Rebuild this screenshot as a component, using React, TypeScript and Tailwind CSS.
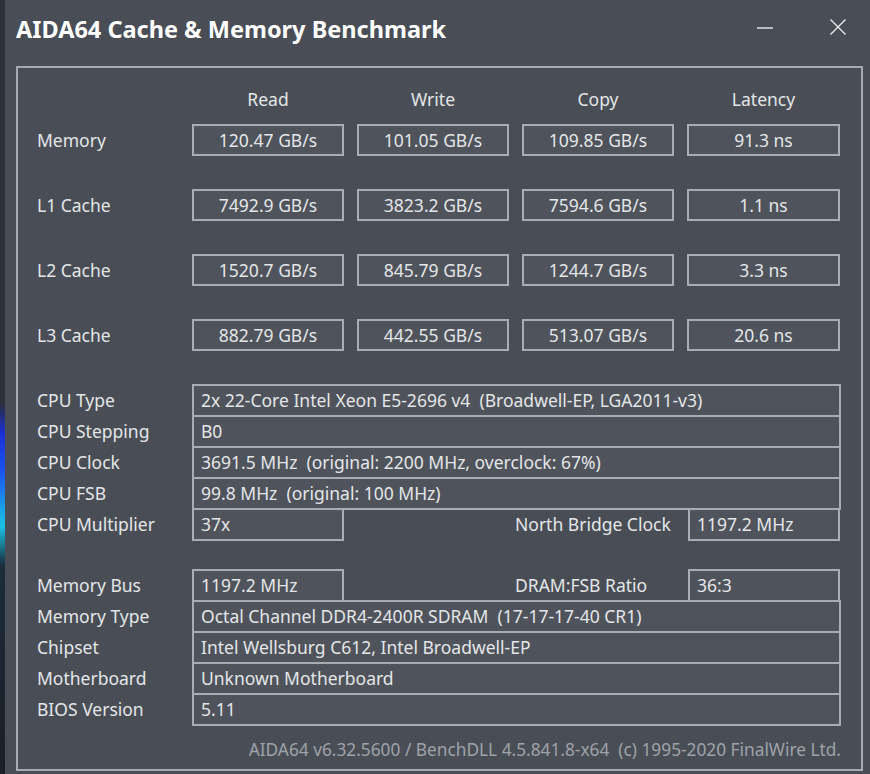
import React from "react";

const BENCH = [
  { label: "Memory", values: ["120.47 GB/s", "101.05 GB/s", "109.85 GB/s", "91.3 ns"] },
  { label: "L1 Cache", values: ["7492.9 GB/s", "3823.2 GB/s", "7594.6 GB/s", "1.1 ns"] },
  { label: "L2 Cache", values: ["1520.7 GB/s", "845.79 GB/s", "1244.7 GB/s", "3.3 ns"] },
  { label: "L3 Cache", values: ["882.79 GB/s", "442.55 GB/s", "513.07 GB/s", "20.6 ns"] },
];

const HEADERS = ["Read", "Write", "Copy", "Latency"];

const CPU_ROWS = [
  { label: "CPU Type", value: "2x 22-Core Intel Xeon E5-2696 v4  (Broadwell-EP, LGA2011-v3)" },
  { label: "CPU Stepping", value: "B0" },
  { label: "CPU Clock", value: "3691.5 MHz  (original: 2200 MHz, overclock: 67%)" },
  { label: "CPU FSB", value: "99.8 MHz  (original: 100 MHz)" },
];

const MEM_ROWS = [
  { label: "Memory Type", value: "Octal Channel DDR4-2400R SDRAM  (17-17-17-40 CR1)" },
  { label: "Chipset", value: "Intel Wellsburg C612, Intel Broadwell-EP" },
  { label: "Motherboard", value: "Unknown Motherboard" },
  { label: "BIOS Version", value: "5.11" },
];

const box = "border-2 border-[#a9adb3] bg-[#4f535b]";

function InfoRow({ label, value }: { label: string; value: string }) {
  return (
    <div className="-mt-[2px] flex h-[33px] items-center pb-[2px] first:mt-0">
      <div className="w-[174px] pl-[19px]">{label}</div>
      <div className={`${box} -mb-[2px] flex h-[33px] flex-1 items-center whitespace-pre pb-[2px] pl-[7px]`}>{value}</div>
    </div>
  );
}

function SplitRow({ label, value, label2, value2 }: { label: string; value: string; label2: string; value2: string }) {
  return (
    <div className="-mt-[2px] flex h-[33px] items-center pb-[2px] first:mt-0">
      <div className="w-[174px] pl-[19px]">{label}</div>
      <div className={`${box} -mb-[2px] flex h-[33px] w-[152px] items-center pb-[2px] pl-[7px]`}>{value}</div>
      <div className="w-[171px]" />
      <div className="w-[173px]">{label2}</div>
      <div className={`${box} -mb-[2px] flex h-[33px] w-[152px] items-center pb-[2px] pl-[7px]`}>{value2}</div>
    </div>
  );
}

export default function App() {
  return (
    <div className="flex h-[774px] w-[870px] overflow-hidden bg-[#494e56] font-['Noto_Sans',sans-serif] text-[17.5px] leading-[24px] text-[#e3e6e8]">
      <div className="w-[5px] shrink-0 bg-[linear-gradient(to_bottom,#2c3038_0%,#2c3038_52%,#1c2fd8_56%,#1a55f0_61%,#18c4e4_68%,#1b2c3c_73%,#1c1f25_100%)]" />
      <div className="flex flex-1 flex-col">
        <div className="flex h-[66px] items-start pl-[11px] pr-[23px]">
          <h1 className="pt-[14px] text-[23.5px] font-bold leading-[30px] text-white">AIDA64 Cache &amp; Memory Benchmark</h1>
          <div className="ml-auto mt-[18px] flex gap-[55px]">
            <svg width="18" height="18" viewBox="0 0 18 18">
              <line x1="1" y1="10" x2="17" y2="10" stroke="#e8eaec" strokeWidth="1.4" />
            </svg>
            <svg width="18" height="18" viewBox="0 0 18 18">
              <path d="M1.5 1.5 L16.5 16.5 M16.5 1.5 L1.5 16.5" stroke="#e8eaec" strokeWidth="1.4" />
            </svg>
          </div>
        </div>

        <div className="ml-[11px] flex h-[705px] w-[847px] flex-col border-2 border-[#a7abb1] pr-[20px]">
          <div className="grid grid-cols-[161px_152px_152px_152px_153px] gap-x-[13px] pt-[19px]">
            <div />
            {HEADERS.map((h) => (
              <div key={h} className="text-center">
                {h}
              </div>
            ))}
          </div>

          <div className="mt-[13px] flex flex-col gap-[33px]">
            {BENCH.map((row) => (
              <div key={row.label} className="grid h-[32px] grid-cols-[161px_152px_152px_152px_153px] gap-x-[13px]">
                <div className="flex items-center pb-[1px] pl-[19px]">{row.label}</div>
                {row.values.map((v, i) => (
                  <div key={i} className={`${box} flex items-center justify-center pb-[1px]`}>
                    {v}
                  </div>
                ))}
              </div>
            ))}
          </div>

          <div className="mt-[33px] flex flex-col">
            {CPU_ROWS.map((r) => (
              <InfoRow key={r.label} {...r} />
            ))}
            <SplitRow label="CPU Multiplier" value="37x" label2="North Bridge Clock" value2="1197.2 MHz" />
          </div>

          <div className="mt-[28px] flex flex-col">
            <SplitRow label="Memory Bus" value="1197.2 MHz" label2="DRAM:FSB Ratio" value2="36:3" />
            {MEM_ROWS.map((r) => (
              <InfoRow key={r.label} {...r} />
            ))}
          </div>

          <div className="mt-[12px] flex justify-end whitespace-pre text-[17.3px] text-[#9ea2a9]">
            AIDA64 v6.32.5600 / BenchDLL 4.5.841.8-x64  (c) 1995-2020 FinalWire Ltd.
          </div>
        </div>
      </div>
    </div>
  );
}
